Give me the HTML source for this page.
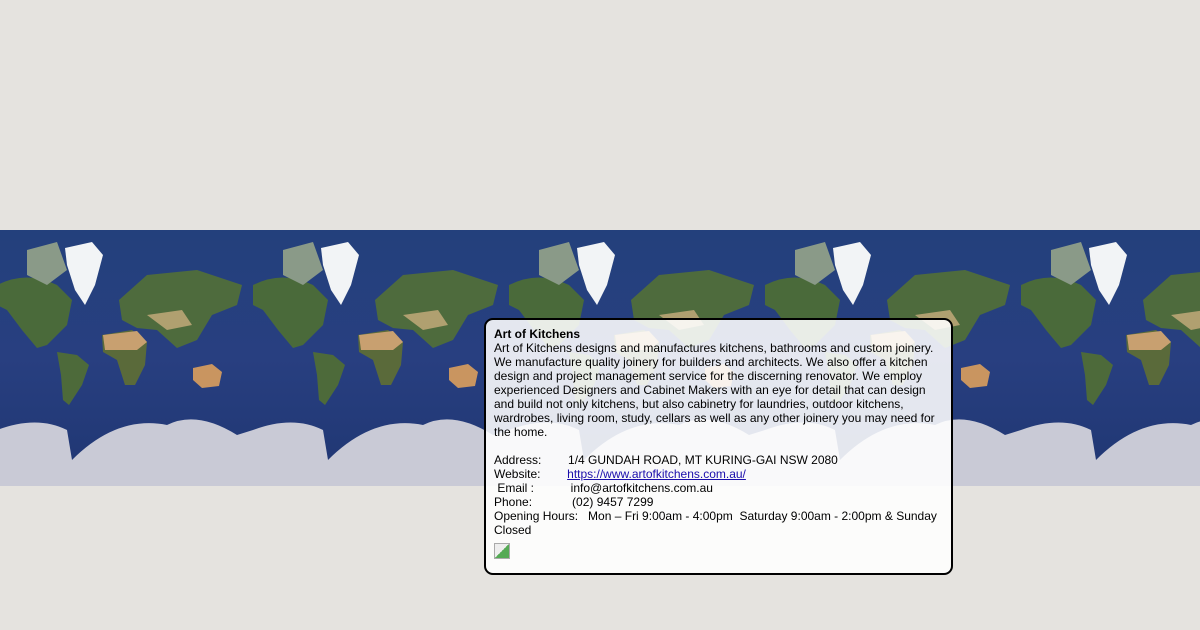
<!DOCTYPE html>
<html><head><style>
body{margin:0;width:1200px;height:630px;background:#e5e3df;overflow:hidden;position:relative;font-family:"Liberation Sans",Arial,sans-serif}
#map{position:absolute;left:0;top:230px;width:1200px;height:256px}
#pop{position:absolute;left:484px;top:318px;width:449px;height:236px;padding:7px 8px 10px 8px;border:2px solid #000;border-radius:9px;background:rgba(255,255,255,0.88);font-size:12px;line-height:14px;color:#000}
a{color:#1a0dab}
.img{width:16px;height:16px;margin-top:6px;border:1px solid #aaa;box-sizing:border-box;background:linear-gradient(135deg,#eee 50%,#5a5 50%)}
</style></head><body>
<svg id="map" width="1200" height="256" xmlns="http://www.w3.org/2000/svg">
<defs>
<linearGradient id="oc" x1="0" y1="0" x2="0" y2="1"><stop offset="0" stop-color="#23407c"/><stop offset="0.5" stop-color="#283f80"/><stop offset="1" stop-color="#1f3672"/></linearGradient>
<pattern id="t" x="-3" y="0" width="256" height="256" patternUnits="userSpaceOnUse">
<rect width="256" height="256" fill="url(#oc)"/>
<path d="M0 55 Q30 40 60 55 L75 70 L70 95 L50 115 L40 118 L25 100 L10 80 L0 75Z" fill="#4a6a3a"/>
<path d="M30 20 L60 12 L70 40 L50 55 L30 45Z" fill="#8a9a88"/>
<path d="M68 18 L95 12 L106 25 L98 55 L88 75 L78 60 L70 35Z" fill="#f2f4f6"/>
<path d="M60 122 L80 125 L92 135 L85 155 L72 175 L66 170 L64 145Z" fill="#4d6a3a"/>
<path d="M105 105 L135 100 L150 112 L148 135 L138 155 L128 155 L120 130 L106 122Z" fill="#5a6a3a"/>
<path d="M106 105 L140 101 L150 112 L140 120 L108 120Z" fill="#c8a070"/>
<path d="M122 70 L150 45 L200 40 L245 55 L240 75 L215 85 L200 110 L180 118 L160 100 L140 98 L125 90Z" fill="#4e6b3d"/>
<path d="M150 85 L185 80 L195 95 L170 100Z" fill="#b0a070"/>
<path d="M196 138 L215 134 L225 142 L222 156 L205 158 L196 150Z" fill="#c99560"/>
<path d="M0 200 Q40 185 70 200 L75 230 Q120 185 170 195 Q200 180 240 205 L256 200 L256 256 L0 256Z" fill="#c9cad6"/>
</pattern>
</defs>
<rect width="1200" height="256" fill="url(#t)"/>
</svg>
<div id="pop"><b>Art of Kitchens</b><br>Art of Kitchens designs and manufactures kitchens, bathrooms and custom joinery. We manufacture quality joinery for builders and architects. We also offer a kitchen design and project management service for the discerning renovator. We employ experienced Designers and Cabinet Makers with an eye for detail that can design and build not only kitchens, but also cabinetry for laundries, outdoor kitchens, wardrobes, living room, study, cellars as well as any other joinery you may need for the home.<br><br>
Address:&nbsp;&nbsp;&nbsp;&nbsp;&nbsp;&nbsp;&nbsp; 1/4 GUNDAH ROAD, MT KURING-GAI NSW 2080<br>
Website:&nbsp;&nbsp;&nbsp;&nbsp;&nbsp;&nbsp;&nbsp; <a href="#">https://www.artofkitchens.com.au/</a><br>
&nbsp;Email :&nbsp;&nbsp;&nbsp;&nbsp;&nbsp;&nbsp;&nbsp;&nbsp;&nbsp;&nbsp; info@artofkitchens.com.au<br>
Phone:&nbsp;&nbsp;&nbsp;&nbsp;&nbsp;&nbsp;&nbsp;&nbsp;&nbsp;&nbsp;&nbsp; (02) 9457 7299<br>
Opening Hours:&nbsp;&nbsp; Mon – Fri 9:00am - 4:00pm&nbsp; Saturday 9:00am - 2:00pm &amp; Sunday Closed
<div class="img"></div></div>
</body></html>
